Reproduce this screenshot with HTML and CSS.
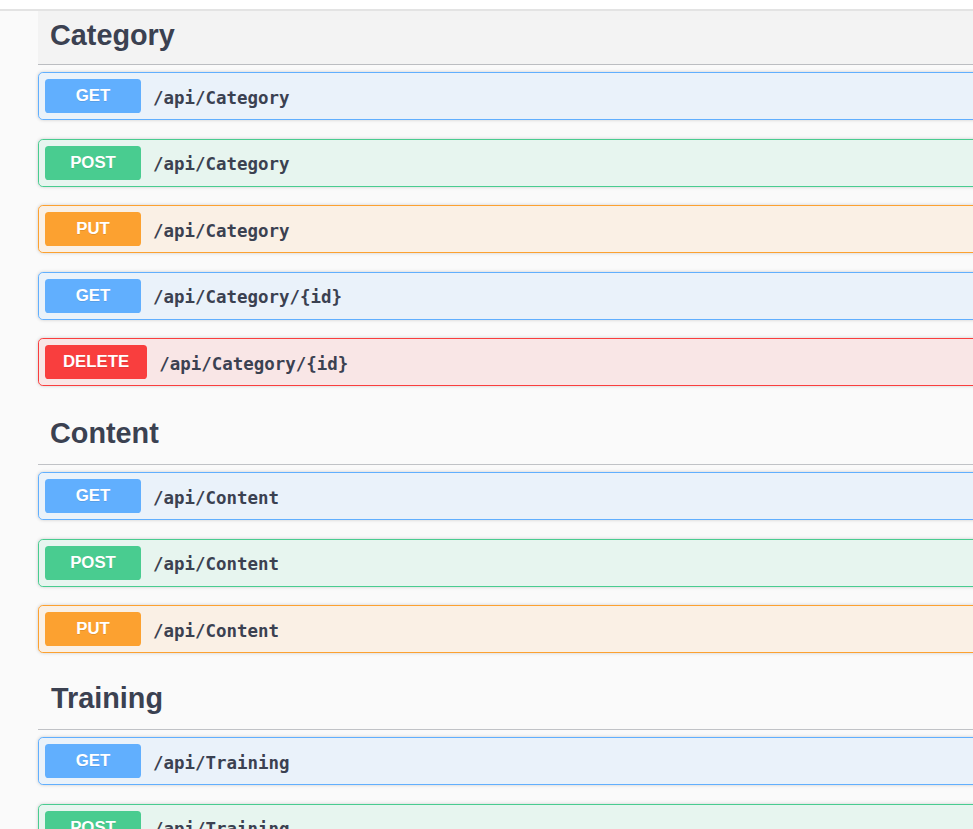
FILE: index.html
```html
<!DOCTYPE html>
<html lang="en">
<head>
<meta charset="utf-8">
<title>API</title>
<link rel="stylesheet" href="styles.css">
</head>
<body>
<div class="topbar"></div>
<main class="tags">
  <section class="tag-section">
    <h3 class="tag tag-first">Category</h3>
    <div class="op op-get"><span class="method">GET</span><span class="path">/api/Category</span></div>
    <div class="op op-post"><span class="method">POST</span><span class="path">/api/Category</span></div>
    <div class="op op-put"><span class="method">PUT</span><span class="path">/api/Category</span></div>
    <div class="op op-get"><span class="method">GET</span><span class="path">/api/Category/{id}</span></div>
    <div class="op op-delete"><span class="method">DELETE</span><span class="path">/api/Category/{id}</span></div>
  </section>
  <section class="tag-section">
    <h3 class="tag">Content</h3>
    <div class="op op-get"><span class="method">GET</span><span class="path">/api/Content</span></div>
    <div class="op op-post"><span class="method">POST</span><span class="path">/api/Content</span></div>
    <div class="op op-put"><span class="method">PUT</span><span class="path">/api/Content</span></div>
  </section>
  <section class="tag-section">
    <h3 class="tag tag-last">Training</h3>
    <div class="op op-get"><span class="method">GET</span><span class="path">/api/Training</span></div>
    <div class="op op-post"><span class="method">POST</span><span class="path">/api/Training</span></div>
  </section>
</main>
</body>
</html>
```

FILE: styles.css
```css
html, body {
  margin: 0;
  padding: 0;
  overflow: hidden;
  background: #fafafa;
}

.topbar {
  height: 9px;
  background: #ffffff;
  border-bottom: 2px solid #e3e3e3;
}

.tags {
  margin-left: 38px;
  width: 1100px;
}

.tag-section {
  display: flex;
  flex-direction: column;
}

.tag {
  margin: 0 0 7px;
  padding: 11px 24px 14.5px 12px;
  font-family: "Liberation Sans", Arial, sans-serif;
  font-weight: 700;
  font-size: 28.8px;
  line-height: 34px;
  color: #3b4151;
  border-bottom: 1px solid rgba(59, 65, 81, 0.3);
}

.tag-first {
  padding-top: 6.5px;
  padding-bottom: 12.5px;
  background: #f3f3f3;
}

.tag-last {
  padding-top: 9px;
  padding-left: 13px;
}

.op {
  display: flex;
  align-items: center;
  box-sizing: border-box;
  height: 48px;
  padding: 6px;
  margin-bottom: 18.5px;
  border: 1px solid;
  border-radius: 4.8px;
  box-shadow: 0 0 3.6px rgba(0, 0, 0, 0.19);
}

.method {
  box-sizing: border-box;
  min-width: 96px;
  height: 34px;
  padding: 0 18px;
  border-radius: 3.6px;
  font-family: "Liberation Sans", Arial, sans-serif;
  font-weight: 700;
  font-size: 16.8px;
  line-height: 34px;
  color: #ffffff;
  text-align: center;
  text-shadow: 0 1px 0 rgba(0, 0, 0, 0.1);
}

.path {
  margin-left: 12px;
  padding-top: 3px;
  font-family: "DejaVu Sans Mono", "Liberation Mono", monospace;
  font-weight: 700;
  font-size: 17.45px;
  color: #3b4151;
}

.op-get {
  border-color: #61affe;
  background: rgba(97, 175, 254, 0.1);
}
.op-get .method { background: #61affe; }

.op-post {
  border-color: #49cc90;
  background: rgba(73, 204, 144, 0.1);
}
.op-post .method { background: #49cc90; }

.op-put {
  border-color: #fca130;
  background: rgba(252, 161, 48, 0.1);
}
.op-put .method { background: #fca130; }

.op-delete {
  border-color: #f93e3e;
  background: rgba(249, 62, 62, 0.1);
}
.op-delete .method { background: #f93e3e; }
```
